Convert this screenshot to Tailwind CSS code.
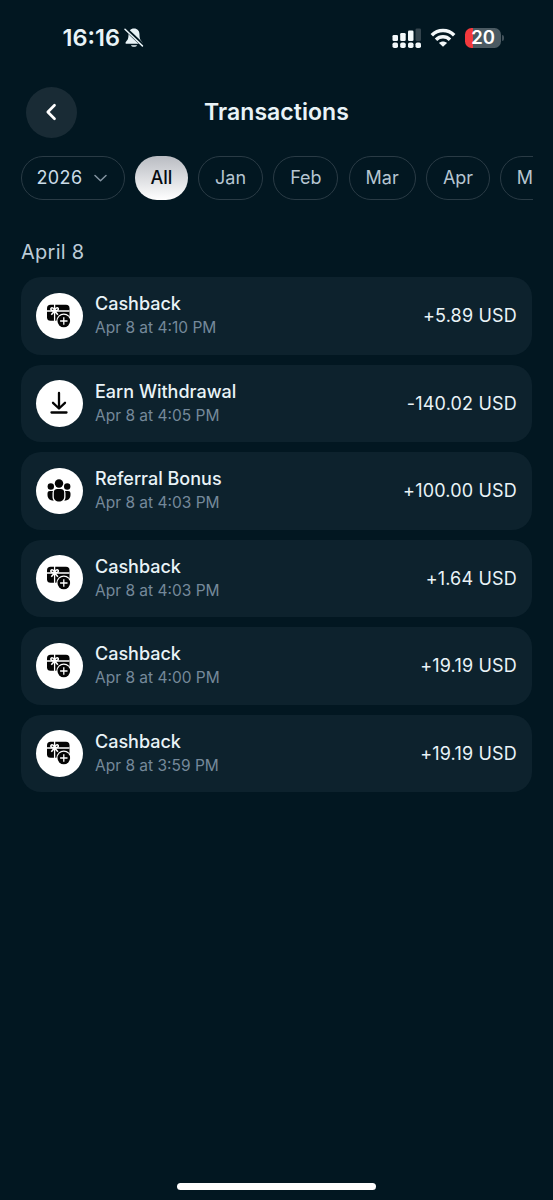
<!DOCTYPE html>
<html lang="en">
<head>
<meta charset="utf-8">
<title>Transactions</title>
<script src="https://cdn.jsdelivr.net/npm/@tailwindcss/browser@4"></script>
</head>
<body class="bg-[#021721]">
<svg class="hidden">
  <symbol id="gift-card" viewBox="0 0 24 24">
    <rect x="0" y="0.8" width="22.5" height="16" rx="3.5" fill="#050505"/>
    <path d="M0 7H22.5M7.6 0V17" stroke="#fff" stroke-width="1.3"/>
    <path d="M7.600 7C4.600 7 3.400 5.800 4 4.400C5 2.900 7.300 4.200 7.600 7C7.900 4.200 10.200 2.900 11.200 4.400C11.800 5.800 10.600 7 7.600 7L4.300 10.800M7.600 7L10.900 10.800" fill="none" stroke="#fff" stroke-width="1.600"/>
    <circle cx="16.800" cy="17" r="7.500" fill="#fff"/>
    <circle cx="16.800" cy="17" r="6.300" fill="#050505"/>
    <path d="M16.800 13.300V20.700M13.100 17H20.500" stroke="#fff" stroke-width="1.300"/>
  </symbol>
</svg>
<div class="flex h-[1200px] w-[553px] flex-col overflow-hidden bg-[#021721] font-['Inter',sans-serif] text-[#e9f3f7]">
  <div class="flex h-[75px] shrink-0 justify-between pl-[62.5px] pr-[49px]">
    <div class="flex h-[76px] items-center gap-[4px]">
      <span class="text-[23.5px] leading-none font-semibold">16:16</span>
      <svg class="h-[22px] w-[20px]" viewBox="0 0 20 22">
        <path d="M10 1.500C6.500 1.500 4.500 4 4.500 7.500C4.500 12 3.500 13 1.800 15C1.200 16 1.500 16.800 2.600 16.800H17.400C18.500 16.800 18.800 16 18.200 15C16.500 13 15.500 12 15.500 7.500C15.500 4 13.500 1.500 10 1.500ZM7 18.200H13C12.500 20.200 7.500 20.200 7 18.200Z" fill="#e9f3f7"/>
        <path d="M1.600 1.800L19 18.500" stroke="#021721" stroke-width="3.800"/>
        <path d="M1 2.200L18.400 18.900" stroke="#e9f3f7" stroke-width="1.500" stroke-linecap="round"/>
      </svg>
    </div>
    <div class="flex h-[75px] items-center">
      <svg class="h-[22px] w-[30px]" viewBox="0 0 30 22" fill="#f3f8fa">
        <rect x="0.500" y="8" width="5.500" height="6" rx="1.300"/><rect x="8.200" y="6" width="5.500" height="8" rx="1.300"/><rect x="16" y="3.500" width="5.500" height="10.500" rx="1.300"/><rect x="23.500" y="1.500" width="5.500" height="12.500" rx="1.300" fill="#34444d"/>
        <rect x="0.500" y="15.500" width="5.500" height="5.500" rx="1.800"/><rect x="8.200" y="15.500" width="5.500" height="5.500" rx="1.800"/><rect x="16" y="15.500" width="5.500" height="5.500" rx="1.800"/><rect x="23.500" y="15.500" width="5.500" height="5.500" rx="1.800"/>
      </svg>
      <svg class="ml-[8px] h-[20px] w-[26px]" viewBox="0 0 26 20" fill="none" stroke="#f3f8fa" stroke-width="3.500">
        <path d="M1.800 7.300C8 1 18 1 24.200 7.300"/><path d="M6 11.700C10 7.800 16 7.800 20 11.700"/><path d="M13 18.800L9 14.900C11.200 12.900 14.800 12.900 17 14.900Z" fill="#f3f8fa" stroke="none"/>
      </svg>
      <div class="ml-[9px] flex h-[20px] w-[36px] items-center justify-center rounded-[6.500px] bg-[linear-gradient(90deg,#f3393d_8px,#4b5a62_8px)] text-[18.5px] leading-none font-semibold text-white">20</div>
      <div class="ml-[1px] h-[6px] w-[2px] rounded-r-full bg-[#42515a]"></div>
    </div>
  </div>

  <div class="mt-[11px] grid h-[52px] shrink-0 grid-cols-[51px_1fr_51px] items-center px-[26px]">
    <div class="flex size-[51px] items-center justify-center rounded-full bg-[#192b35]">
      <svg class="mr-[2px] h-[18px] w-[12px]" viewBox="0 0 12 18" fill="none" stroke="#fff" stroke-width="2.700" stroke-linecap="round" stroke-linejoin="round"><path d="M9.500 2.300L2.800 9L9.500 15.700"/></svg>
    </div>
    <h1 class="text-center text-[23px] leading-none font-semibold tracking-[0.05px]">Transactions</h1>
  </div>

  <div class="mt-[18px] mr-[20px] ml-[20.500px] flex h-[43.500px] shrink-0 gap-[10.300px] overflow-hidden text-[18px] leading-[20px] text-[#b6c5d1]">
    <div class="flex w-[104px] shrink-0 items-center justify-center gap-[11px] rounded-full border border-[#2a3b45] pr-[2px] text-[#cbdce8]"><span class="tracking-[0.400px]">2026</span>
      <svg class="h-[8px] w-[13px]" viewBox="0 0 13 8" fill="none" stroke="#8494a1" stroke-width="1.500" stroke-linecap="round" stroke-linejoin="round"><path d="M1 1.500L6.500 6.700L12 1.500"/></svg></div>
    <div class="flex w-[53px] shrink-0 items-center justify-center rounded-full bg-linear-to-b from-[#b9bcc2] to-white font-medium text-[#050a10]">All</div>
    <div class="flex w-[65px] shrink-0 items-center justify-center rounded-full border border-[#2a3b45]">Jan</div>
    <div class="flex w-[65px] shrink-0 items-center justify-center rounded-full border border-[#2a3b45]">Feb</div>
    <div class="flex w-[67px] shrink-0 items-center justify-center rounded-full border border-[#2a3b45]">Mar</div>
    <div class="flex w-[64px] shrink-0 items-center justify-center rounded-full border border-[#2a3b45]">Apr</div>
    <div class="flex w-[70px] shrink-0 items-center rounded-full border border-[#2a3b45] pl-[15.500px]">M</div>
  </div>

  <h2 class="mt-[41.500px] ml-[21px] h-[36px] text-[20px] leading-[22px] tracking-[0.250px] text-[#bdccd8]">April 8</h2>

  <div class="mx-[21px] flex flex-col gap-[10px]">
    <div class="flex h-[77.500px] items-center rounded-[20px] bg-[#0d222d] px-[15px]">
      <div class="flex size-[46.500px] items-center justify-center rounded-full bg-white"><svg class="size-[24px]"><use href="#gift-card"/></svg></div>
      <div class="ml-[12.500px] flex-1 pt-[1px]"><div class="text-[18px] leading-[24px] font-medium">Cashback</div><div class="text-[15.500px] leading-[24px] text-[#75899a]">Apr 8 at 4:10 PM</div></div>
      <div class="text-[18px] tracking-[0.180px]">+5.89 USD</div>
    </div>
    <div class="flex h-[77.500px] items-center rounded-[20px] bg-[#0d222d] px-[15px]">
      <div class="flex size-[46.500px] items-center justify-center rounded-full bg-white"><svg class="mr-px size-[24px]" viewBox="0 0 24 24" fill="none" stroke="#050505" stroke-width="2.300" stroke-linecap="round" stroke-linejoin="round"><path d="M12 2V17M6 11.800L12 17.500L18 11.800M4.500 21.500H19.500"/></svg></div>
      <div class="ml-[12.500px] flex-1 pt-[1px]"><div class="text-[18px] leading-[24px] font-medium">Earn Withdrawal</div><div class="text-[15.500px] leading-[24px] text-[#75899a]">Apr 8 at 4:05 PM</div></div>
      <div class="text-[18px] tracking-[0.180px]">-140.02 USD</div>
    </div>
    <div class="flex h-[77.500px] items-center rounded-[20px] bg-[#0d222d] px-[15px]">
      <div class="flex size-[46.500px] items-center justify-center rounded-full bg-white"><svg class="mr-px size-[24px]" viewBox="0 0 24 24" fill="#050505"><circle cx="12" cy="4.500" r="4.200"/><circle cx="3.800" cy="7.500" r="3.200"/><circle cx="20.200" cy="7.500" r="3.200"/><path d="M10.300 10H13.700C16 10 17.200 11.200 17.200 13.500V17.500C17.200 21 15 22.500 12 22.500S6.800 21 6.800 17.500V13.500C6.800 11.200 8 10 10.300 10ZM6 12C5.600 12.700 5.500 13.500 5.500 14.500V18C5.500 19.500 6 20.800 6.800 21.700C3 21.700 0.500 19.500 0.500 16V14.500C0.500 12.800 1.500 12 3 12ZM18 12C18.400 12.700 18.500 13.500 18.500 14.500V18C18.500 19.500 18 20.800 17.200 21.700C21 21.700 23.500 19.500 23.500 16V14.500C23.500 12.800 22.500 12 21 12Z"/></svg></div>
      <div class="ml-[12.500px] flex-1 pt-[1px]"><div class="text-[18px] leading-[24px] font-medium">Referral Bonus</div><div class="text-[15.500px] leading-[24px] text-[#75899a]">Apr 8 at 4:03 PM</div></div>
      <div class="text-[18px] tracking-[0.180px]">+100.00 USD</div>
    </div>
    <div class="flex h-[77.500px] items-center rounded-[20px] bg-[#0d222d] px-[15px]">
      <div class="flex size-[46.500px] items-center justify-center rounded-full bg-white"><svg class="size-[24px]"><use href="#gift-card"/></svg></div>
      <div class="ml-[12.500px] flex-1 pt-[1px]"><div class="text-[18px] leading-[24px] font-medium">Cashback</div><div class="text-[15.500px] leading-[24px] text-[#75899a]">Apr 8 at 4:03 PM</div></div>
      <div class="text-[18px] tracking-[0.180px]">+1.64 USD</div>
    </div>
    <div class="flex h-[77.500px] items-center rounded-[20px] bg-[#0d222d] px-[15px]">
      <div class="flex size-[46.500px] items-center justify-center rounded-full bg-white"><svg class="size-[24px]"><use href="#gift-card"/></svg></div>
      <div class="ml-[12.500px] flex-1 pt-[1px]"><div class="text-[18px] leading-[24px] font-medium">Cashback</div><div class="text-[15.500px] leading-[24px] text-[#75899a]">Apr 8 at 4:00 PM</div></div>
      <div class="text-[18px] tracking-[0.180px]">+19.19 USD</div>
    </div>
    <div class="flex h-[77.500px] items-center rounded-[20px] bg-[#0d222d] px-[15px]">
      <div class="flex size-[46.500px] items-center justify-center rounded-full bg-white"><svg class="size-[24px]"><use href="#gift-card"/></svg></div>
      <div class="ml-[12.500px] flex-1 pt-[1px]"><div class="text-[18px] leading-[24px] font-medium">Cashback</div><div class="text-[15.500px] leading-[24px] text-[#75899a]">Apr 8 at 3:59 PM</div></div>
      <div class="text-[18px] tracking-[0.180px]">+19.19 USD</div>
    </div>
  </div>

  <div class="mx-auto mt-auto mb-[10px] h-[7px] w-[199px] shrink-0 rounded-full bg-white"></div>
</div>
</body>
</html>
